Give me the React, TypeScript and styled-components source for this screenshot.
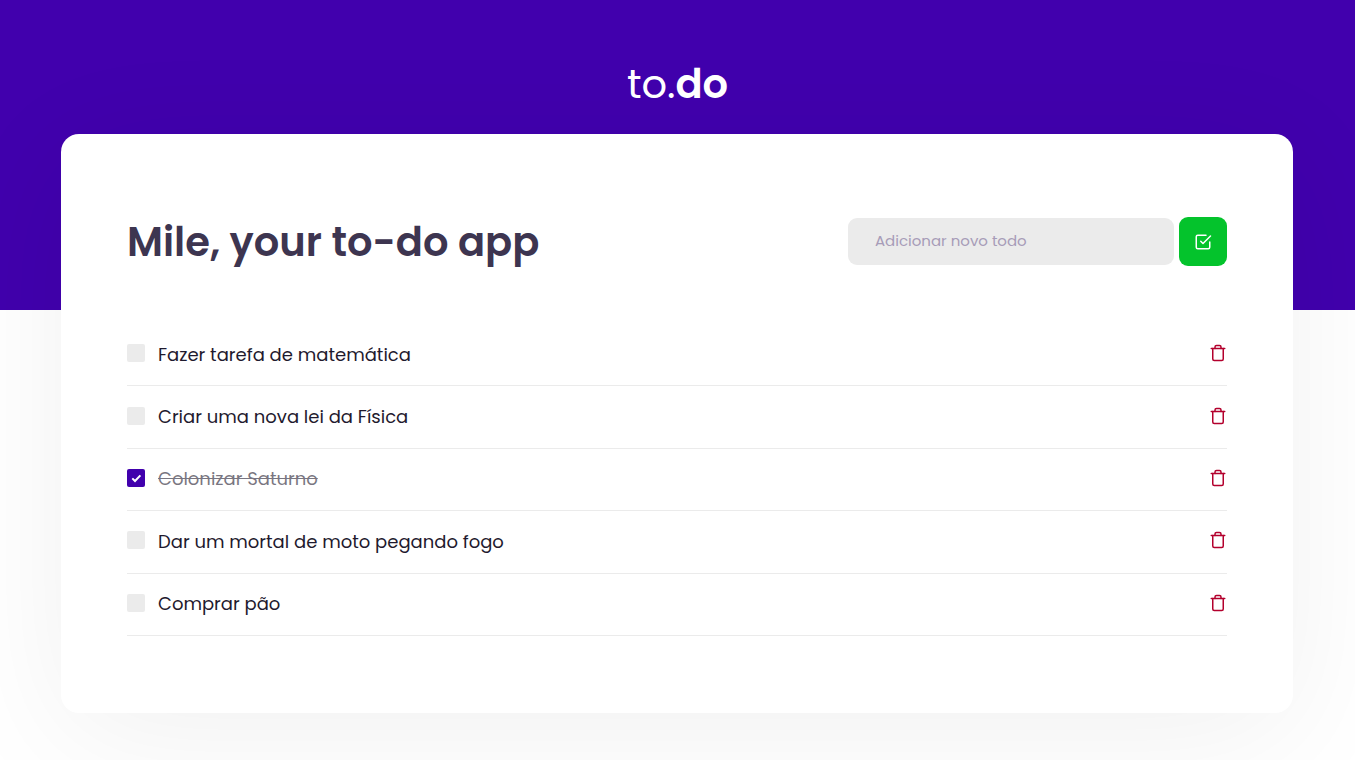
import React, { FormEvent, useState } from "react";
import styled, { createGlobalStyle } from "styled-components";
import { FiCheckSquare, FiTrash } from "react-icons/fi";

const GlobalStyle = createGlobalStyle`
  * {
    box-sizing: border-box;
    margin: 0;
    padding: 0;
  }

  body {
    background: #fff;
    color: #1f1a2e;
    font-family: Poppins, Inter, sans-serif;
    -webkit-font-smoothing: antialiased;
  }

  button,
  input {
    font: inherit;
  }

  button,
  label {
    cursor: pointer;
  }
`;

const Header = styled.header`
  height: 310px;
  padding-top: 54px;
  background: #4100ad;
`;

const Logo = styled.p`
  color: #fff;
  font-size: 40px;
  font-weight: 400;
  line-height: 60px;
  text-align: center;

  strong {
    font-weight: 600;
  }
`;

const Card = styled.main`
  margin: -176px 62px 47px 61px;
  padding: 83px 66px 77px;
  border-radius: 18px;
  background: #fff;
  box-shadow: 0 22px 132px rgba(0, 0, 0, 0.06);
`;

const CardHeader = styled.div`
  display: flex;
  align-items: center;
  justify-content: space-between;
  gap: 24px;
`;

const Title = styled.h1`
  color: #3d3550;
  font-size: 40px;
  font-weight: 600;
  line-height: 48px;
`;

const AddForm = styled.form`
  display: flex;
  align-items: center;
  gap: 5px;
`;

const TodoInput = styled.input`
  width: 326px;
  height: 47px;
  padding: 0 27px 2px;
  border: 0;
  border-radius: 9px;
  background: #ebebeb;
  color: #3d3550;
  font-size: 15px;

  &::placeholder {
    color: #a79cb8;
    opacity: 1;
  }
`;

const AddButton = styled.button`
  display: grid;
  place-items: center;
  width: 48px;
  height: 49px;
  border: 0;
  border-radius: 9px;
  background: #04c32c;
  color: #fff;
`;

const TodoList = styled.ul`
  display: grid;
  grid-auto-rows: 1fr;
  min-height: 312px;
  margin-top: 58px;
  list-style: none;
`;

const TodoRow = styled.li`
  display: flex;
  align-items: center;
  justify-content: space-between;
  padding-bottom: 3px;
  border-bottom: 1px solid #ebebeb;
`;

const TodoLabel = styled.label`
  display: flex;
  align-items: center;
  gap: 13px;
`;

const CheckWrap = styled.span`
  position: relative;
  display: block;
  width: 18px;
  height: 18px;

  svg {
    position: absolute;
    inset: 0;
    pointer-events: none;
  }
`;

const Checkbox = styled.input`
  display: block;
  appearance: none;
  width: 18px;
  height: 18px;
  border-radius: 2px;
  background: #ebebeb;
  cursor: pointer;

  &:checked {
    background: #4100ad;
  }
`;

const TodoText = styled.span<{ $done: boolean }>`
  padding-top: 3px;
  font-size: 18px;
  line-height: 26px;
  opacity: ${({ $done }) => ($done ? 0.6 : 1)};
  text-decoration: ${({ $done }) => ($done ? "line-through" : "none")};
`;

const DeleteButton = styled.button`
  display: block;
  border: 0;
  background: transparent;
  color: #b3002d;

  svg {
    display: block;
  }
`;

const initialTodos = [
  { id: 1, text: "Fazer tarefa de matemática", done: false },
  { id: 2, text: "Criar uma nova lei da Física", done: false },
  { id: 3, text: "Colonizar Saturno", done: true },
  { id: 4, text: "Dar um mortal de moto pegando fogo", done: false },
  { id: 5, text: "Comprar pão", done: false },
];

export default function App() {
  const [todos, setTodos] = useState(initialTodos);
  const [draft, setDraft] = useState("");

  function addTodo(event: FormEvent) {
    event.preventDefault();
    const text = draft.trim();
    if (!text) return;
    setTodos([...todos, { id: Date.now(), text, done: false }]);
    setDraft("");
  }

  function toggle(id: number) {
    setTodos(todos.map((t) => (t.id === id ? { ...t, done: !t.done } : t)));
  }

  return (
    <>
      <GlobalStyle />
      <Header>
        <Logo>
          to.<strong>do</strong>
        </Logo>
      </Header>
      <Card>
        <CardHeader>
          <Title>Mile, your to-do app</Title>
          <AddForm onSubmit={addTodo}>
            <TodoInput
              type="text"
              aria-label="Adicionar novo todo"
              placeholder="Adicionar novo todo"
              value={draft}
              onChange={(e) => setDraft(e.target.value)}
            />
            <AddButton type="submit" aria-label="Adicionar">
              <FiCheckSquare size={18} />
            </AddButton>
          </AddForm>
        </CardHeader>
        <TodoList>
          {todos.map((todo) => (
            <TodoRow key={todo.id}>
              <TodoLabel>
                <CheckWrap>
                  <Checkbox
                    type="checkbox"
                    checked={todo.done}
                    onChange={() => toggle(todo.id)}
                  />
                  {todo.done && (
                    <svg width="18" height="18" viewBox="0 0 18 18" fill="none">
                      <path d="M5.3 9.4 8 12l5.4-5.6" stroke="#fff" strokeWidth="2" />
                    </svg>
                  )}
                </CheckWrap>
                <TodoText $done={todo.done}>{todo.text}</TodoText>
              </TodoLabel>
              <DeleteButton
                type="button"
                aria-label={`Remover ${todo.text}`}
                onClick={() => setTodos(todos.filter((t) => t.id !== todo.id))}
              >
                <FiTrash size={18} />
              </DeleteButton>
            </TodoRow>
          ))}
        </TodoList>
      </Card>
    </>
  );
}
